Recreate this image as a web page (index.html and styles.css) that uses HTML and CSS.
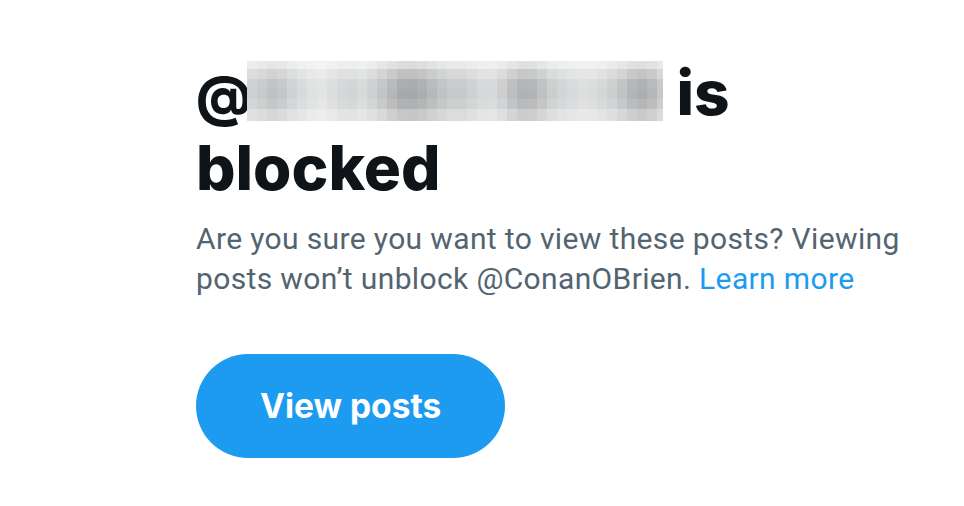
FILE: index.html
```html
<!DOCTYPE html>
<html lang="en">
<head>
<meta charset="utf-8">
<title>Blocked</title>
<link rel="stylesheet" href="styles.css">
</head>
<body>
<main class="panel">
  <h1 class="title"><span class="at">@</span><span class="mosaic" aria-hidden="true"><span class="mosaic-shade"></span></span> is blocked</h1>
  <p class="desc">Are you sure you want to view these posts? Viewing posts won’t unblock @ConanOBrien. <a class="link" href="#">Learn more</a></p>
  <button class="btn" type="button">View posts</button>
</main>
</body>
</html>
```

FILE: styles.css
```css
html, body {
  margin: 0;
  padding: 0;
  background: #ffffff;
}

.panel {
  padding: 57px 0 0 196px;
  width: 740px;
  display: flex;
  flex-direction: column;
  align-items: flex-start;
}

.title {
  margin: 0 0 15px 0;
  font-family: Inter, "Liberation Sans", sans-serif;
  font-weight: 800;
  font-size: 62px;
  line-height: 72px;
  color: #0f1419;
  width: 560px;
}

.at {
  font-size: 54px;
  letter-spacing: -5px;
}

.mosaic {
  position: relative;
  display: inline-block;
  width: 416px;
  height: 60px;
  vertical-align: -6px;
  background-image: linear-gradient(to right,
    #cfd0d1 0 10px, #c8c9ca 10px 20px, #c0c1c2 20px 30px, #c5c6c7 30px 40px,
    #d0d1d2 40px 50px, #d8d9da 50px 60px, #dfe0e0 60px 70px, #e2e3e3 70px 80px,
    #dcdddd 80px 90px, #d5d6d7 90px 100px, #d3d4d5 100px 110px, #d8d9d9 110px 120px,
    #cfd0d1 120px 130px, #c3c4c5 130px 140px, #b5b6b7 140px 150px, #a8a9aa 150px 160px,
    #a7a8a9 160px 170px, #adaeaf 170px 180px, #b7b8b9 180px 190px, #c1c2c3 190px 200px,
    #c8c9ca 200px 210px, #c8c9ca 210px 220px, #cfd0d1 220px 230px, #d6d7d8 230px 240px,
    #d7d8d9 240px 250px, #cdcecf 250px 260px, #bdbebf 260px 270px, #b1b2b3 270px 280px,
    #b3b4b5 280px 290px, #bfc0c1 290px 300px, #cccdce 300px 310px, #d3d4d5 310px 320px,
    #d8d9da 320px 330px, #dcdddd 330px 340px, #dadbdb 340px 350px, #d5d6d7 350px 360px,
    #cdcecf 360px 370px, #c1c2c3 370px 380px, #b3b4b5 380px 390px, #adaeaf 390px 400px,
    #b5b6b7 400px 410px, #c6c7c8 410px 416px);
}

.mosaic-shade {
  position: absolute;
  inset: 0;
  background-image: linear-gradient(to bottom,
    rgba(255,255,255,0.6) 0 8px,
    rgba(255,255,255,0.28) 8px 18px,
    rgba(255,255,255,0.05) 18px 28px,
    rgba(255,255,255,0) 28px 38px,
    rgba(255,255,255,0.1) 38px 48px,
    rgba(255,255,255,0.35) 48px 60px);
}

.desc {
  margin: 0;
  font-family: Roboto, "Liberation Sans", sans-serif;
  font-weight: 400;
  font-size: 30px;
  line-height: 40px;
  letter-spacing: 0.36px;
  color: #536471;
  width: 740px;
}

.link {
  color: #1d9bf0;
  text-decoration: none;
}

.btn {
  margin-top: 55px;
  height: 104px;
  padding: 0 64px;
  border: 0;
  border-radius: 52px;
  background: #1d9bf0;
  color: #ffffff;
  font-family: Inter, "Liberation Sans", sans-serif;
  font-weight: 700;
  font-size: 33.5px;
  cursor: pointer;
}
```
